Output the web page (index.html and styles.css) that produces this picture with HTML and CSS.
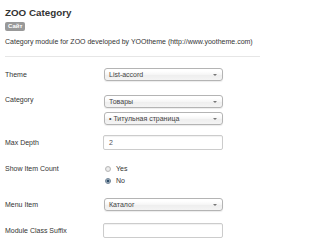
FILE: index.html
```html
<!DOCTYPE html>
<html>
<head>
<meta charset="utf-8">
<link rel="stylesheet" href="styles.css">
</head>
<body>
<div class="page">
  <h2 class="title">ZOO Category</h2>
  <span class="badge">Сайт</span>
  <p class="desc">Category module for ZOO developed by YOOtheme (http://www.yootheme.com)</p>
  <div class="sep"></div>

  <div class="row row-theme">
    <div class="label">Theme</div>
    <div class="controls">
      <div class="select"><span>List-accord</span><i class="arrow"></i></div>
    </div>
  </div>

  <div class="row row-category">
    <div class="label label-top">Category</div>
    <div class="controls">
      <div class="select"><span>Товары</span><i class="arrow"></i></div>
      <div class="select select-second"><span>• Титульная страница</span><i class="arrow"></i></div>
    </div>
  </div>

  <div class="row row-depth">
    <div class="label label-input">Max Depth</div>
    <div class="controls">
      <div class="input">2</div>
    </div>
  </div>

  <div class="row row-count">
    <div class="label label-radio">Show Item Count</div>
    <div class="controls">
      <div class="radio"><span class="dot"></span>Yes</div>
      <div class="radio"><span class="dot checked"></span>No</div>
    </div>
  </div>

  <div class="row row-menu">
    <div class="label">Menu Item</div>
    <div class="controls">
      <div class="select"><span>Каталог</span><i class="arrow"></i></div>
    </div>
  </div>

  <div class="row row-suffix">
    <div class="label label-input">Module Class Suffix</div>
    <div class="controls">
      <div class="input"></div>
    </div>
  </div>
</div>
</body>
</html>
```

FILE: styles.css
```css
html, body {
  margin: 0;
  padding: 0;
  background: #ffffff;
}
body {
  font-family: "Liberation Sans", Arial, sans-serif;
  color: #333333;
  font-size: 7px;
  width: 260px;
  height: 250px;
  overflow: hidden;
}
.page {
  padding: 6px 0 0 5px;
}
.title {
  margin: 0;
  font-size: 9.8px;
  line-height: 13px;
  font-weight: bold;
  color: #333;
}
.badge {
  display: inline-block;
  margin-top: 3px;
  height: 9px;
  line-height: 9px;
  padding: 0 3px;
  background: #999999;
  color: #ffffff;
  font-size: 6px;
  font-weight: bold;
  border-radius: 2px;
  vertical-align: top;
}
.desc {
  margin: 6px 0 0;
  line-height: 10px;
  font-size: 7px;
  white-space: nowrap;
}
.sep {
  margin-top: 9px;
  height: 1px;
  background: #e6e6e6;
}
.row {
  display: flex;
}
.label {
  width: 99px;
  flex: none;
  line-height: 13px;
}
.label-top {
  line-height: 10px;
}
.label-input {
  line-height: 15px;
}
.label-radio {
  line-height: 11px;
}
.controls {
  display: flex;
  flex-direction: column;
}
.row-theme { margin-top: 11px; }
.row-category { margin-top: 14px; }
.row-depth { margin-top: 10px; }
.row-count { margin-top: 13px; }
.row-menu { margin-top: 11px; }
.row-suffix { margin-top: 12px; }

.select {
  box-sizing: border-box;
  width: 119px;
  height: 13px;
  border: 1px solid #b4b4b4;
  border-radius: 3px;
  background: linear-gradient(#ffffff 20%, #f6f6f6 50%, #eeeeee 52%, #f4f4f4 100%);
  box-shadow: 0 1px 1px rgba(0,0,0,0.08);
  display: flex;
  align-items: center;
  justify-content: space-between;
  padding: 0 5px 0 4px;
  line-height: 11px;
  color: #444;
}
.select-second {
  margin-top: 4px;
}
.arrow {
  width: 0;
  height: 0;
  border-left: 2px solid transparent;
  border-right: 2px solid transparent;
  border-top: 2px solid #777;
  margin-top: 1px;
}
.input {
  box-sizing: border-box;
  width: 120px;
  height: 15px;
  margin-left: -1px;
  border: 1px solid #cccccc;
  border-radius: 2px;
  box-shadow: inset 0 1px 1px rgba(0,0,0,0.06);
  padding: 0 5px;
  line-height: 13px;
  color: #555;
}
.radio {
  display: flex;
  align-items: center;
  height: 12px;
  line-height: 12px;
}
.dot {
  box-sizing: border-box;
  width: 6px;
  height: 6px;
  border-radius: 50%;
  border: 1px solid #b8b8b8;
  background: radial-gradient(circle, #f4f4f4 0, #dcdcdc 100%);
  margin-right: 5px;
  margin-left: 1px;
}
.dot.checked {
  border-color: #6d8194;
  background: radial-gradient(circle, #2f4d69 0, #2f4d69 45%, #b9c6d2 60%, #dfe6ec 100%);
}
```
